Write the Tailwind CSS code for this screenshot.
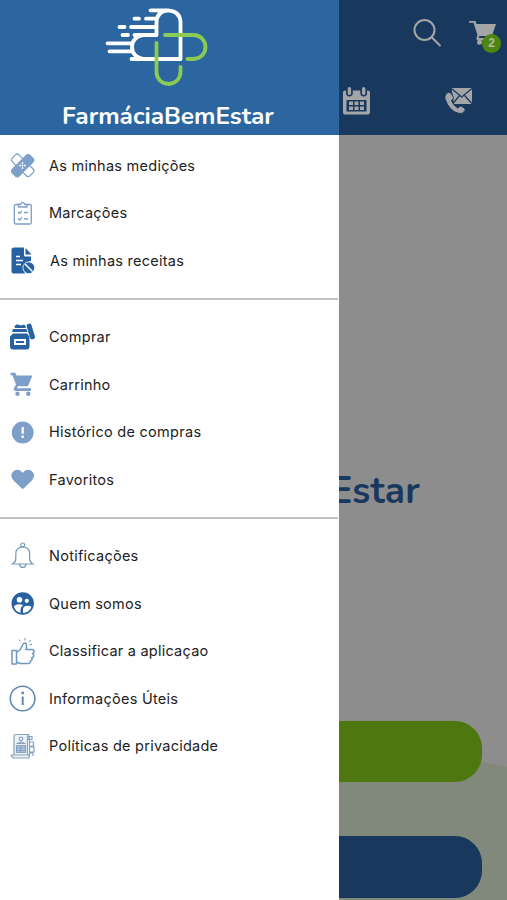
<!DOCTYPE html>
<html lang="pt">
<head>
<meta charset="utf-8">
<title>FarmáciaBemEstar</title>
<script src="https://cdn.jsdelivr.net/npm/@tailwindcss/browser@4"></script>
</head>
<body class="bg-[#8d8d8d]">
<div class="relative w-[507px] h-[900px] overflow-hidden bg-[#8d8d8d]">

  <!-- App page, dimmed behind the drawer -->
  <main class="flex flex-col h-full">
    <header class="h-[135px] shrink-0 bg-[#19385e] text-[#a3a5a7] flex flex-col">
      <div class="flex justify-end pt-[18px] pr-[10px] gap-[27px]">
        <svg class="w-[29px] h-[30px]" viewBox="0 0 29 30" fill="none" stroke="currentColor" stroke-width="2"><circle cx="11.500" cy="12" r="10"/><path d="M18.700 19.300L27.500 28"/></svg>
        <div class="relative">
          <svg class="w-[28px] h-[30px]" viewBox="0 0 28 30" fill="currentColor"><path d="M0 3h6.500l1 3H27l-3.500 10.500q-.5 1.500-2 1.500H10.500l-1 2H25v2.500H10q-3 0-2.500-3l1-2.500L4.500 4.700H0z"/><circle cx="10.500" cy="24.300" r="2.500"/></svg>
          <span class="absolute left-[13px] top-[16px] size-[19px] rounded-full bg-[#4f8610] text-[#b2b8aa] font-['Liberation_Sans'] font-bold text-[12px] leading-[19px] text-center">2</span>
        </div>
      </div>
      <div class="flex pl-[343px] gap-[74px] pt-[38px]">
        <svg class="w-[27px] h-[29px]" viewBox="0 0 27 29" fill="currentColor"><path fill-rule="evenodd" d="M2 4.500h1v2.500a3.400 3.400 0 0 0 6.800 0V4.500h7.500v2.500a3.400 3.400 0 0 0 6.800 0V4.500H25q2 0 2 2V26.500q0 2-2 2H2q-2 0-2-2V6.500q0-2 2-2zM3.500 14v11.500h20V14z"/><rect x="4.700" y="1" width="3.400" height="8" rx="1.700"/><rect x="19" y="1" width="3.400" height="8" rx="1.700"/><path d="M6 15.500h4v3.500H6zM11.500 15.500h4v3.500h-4zM17 15.500h4v3.500h-4zM6 20.500h4V24H6zM11.500 20.500h4V24h-4zM17 20.500h4V24h-4z"/></svg>
        <svg class="w-[29px] h-[29px]" viewBox="0 0 29 29"><path fill="currentColor" d="M7.500 2H28v16H10z"/><path d="M7.500 2.500L17.700 11 28 2.500M9 17.500l6.500-8M28 17.500L20.500 9.500" fill="none" stroke="#19385e" stroke-width="1.200"/><path d="M5 6Q0 8 1 13q4 12 14 14.500 4 1 6.500-3.500-.5-2.500-4.500-4-2 0-3 2.200Q9 19 7.500 14.500q2-1.500 2-3Q8 7 5 6z" fill="currentColor" stroke="#19385e" stroke-width="1"/></svg>
      </div>
    </header>
    <div class="h-[586px] shrink-0 flex items-center">
      <div class="w-[420px] mt-[126px] text-right font-['Nunito','Open_Sans',sans-serif] font-bold text-[37px] leading-[48px] tracking-[0.2px] text-[#19385e]">Estar</div>
    </div>
    <div class="relative flex-1 flex flex-col gap-[54px] items-start">
      <svg class="absolute left-0 top-0 w-[507px] h-[179px]" viewBox="0 0 507 179"><path d="M339 60Q420 35 477 40 492 42 507 46V179H339z" fill="#81897d"/></svg>
      <div class="relative ml-[25px] w-[457px] h-[61px] rounded-[27px] bg-[#4e7710]"></div>
      <div class="relative ml-[25px] w-[457px] h-[62px] rounded-[27px] bg-[#19385e]"></div>
    </div>
  </main>

  <!-- Navigation drawer -->
  <aside class="absolute inset-y-0 left-0 w-[339px] bg-white flex flex-col font-['Inter',sans-serif] text-[14.5px] text-[#222]">
    <div class="h-[134.700px] shrink-0 bg-[#2c66a1] flex flex-col items-center">
      <svg class="w-[339px] h-[90px] shrink-0" viewBox="0 0 339 90" fill="none" stroke-width="3.800" stroke-linecap="round" stroke-linejoin="round">
        <path stroke="#fff" d="M150.500 10.300H168Q180.500 11 180.500 23V59H131.500M168 10.300Q156.500 11 156.500 23V35H134.500M144 35Q132 37 132 47T144 59M134.500 18.700h4.500M146 18.700h10M119.500 27h5M131 27h25M122.500 35h5.500M107.500 43.300H131M109.500 51.300H131"/>
        <path stroke="#8bcb54" d="M165 35h28.500a12 12 0 0 1 0 24h-6M156.500 43v29a12 12 0 0 0 24 0v-5"/>
      </svg>
      <div class="text-white font-['Nunito','Open_Sans',sans-serif] font-bold text-[24.400px] leading-[32px] mt-[10px] -ml-[3px] whitespace-nowrap">FarmáciaBemEstar</div>
    </div>

    <nav class="pt-[7px]">
      <ul class="h-[156px] *:h-[47.6px] *:flex *:items-center *:pl-[9px] *:gap-[13px] *:whitespace-nowrap">
        <li><svg class="size-[27px]" viewBox="0 0 27 27"><g transform="rotate(-45 13.500 13.500)" stroke="#7e9fc9" stroke-width="1.200"><rect x="9" y="1" width="9.500" height="25" rx="2.500" fill="#fff"/><path d="M8 9H4Q1 9 1 12v3.500q0 3 3 3h4zM19 9h4q3 0 3 3v3.500q0 3-3 3h-4zM9 9h9.500v9.500H9z" fill="#7e9fc9"/></g><g fill="#fff"><circle cx="11" cy="13.500" r=".9"/><circle cx="16" cy="13.500" r=".9"/><circle cx="13.500" cy="11" r=".9"/><circle cx="13.500" cy="16" r=".9"/><circle cx="13.500" cy="13.500" r=".9"/></g></svg><span class="tracking-[0.26px]">As minhas medições</span></li>
        <li><svg class="size-[27px]" viewBox="0 0 27 27" fill="none" stroke="#7e9fc9" stroke-width="1.300"><rect x="5.300" y="4.500" width="17" height="19.500" rx="1.500"/><path d="M9.500 7V4.500h2.200q.3-2 2-2t2 2H18V7z" fill="#fff"/><path d="M9 12l1.500 1.500L13 11M15 12.500h4M9 18.500l1.500 1.500 2.500-2.500M15 19h4"/></svg><span class="tracking-[0.26px]">Marcações</span></li>
        <li><svg class="size-[27px]" viewBox="0 0 27 27"><path fill="#2861a2" d="M5 .5h10V8q0 1.500 1.500 1.500H22V14q-7 1-7.500 8 .2 3 2 4.500H5Q2.500 26.500 2.500 24V3Q2.500.5 5 .5zM16.500 1l6 6.500h-6z"/><path d="M7 9.500h4M7 13.500h7M7 17.500h5" stroke="#fff" stroke-width="1.300"/><circle cx="19.800" cy="20.800" r="5.900" fill="#2861a2" stroke="#fff" stroke-width=".8"/><path d="M16 17l7.500 7.500" stroke="#fff" stroke-width="1.400"/></svg><span class="ml-[1px] tracking-[0.26px]">As minhas receitas</span></li>
      </ul>
      <hr class="border-0 h-[2px] w-[338px] bg-[#c2c2c2]">
      <ul class="h-[217px] pt-[13.500px] *:h-[47.6px] *:flex *:items-center *:pl-[9px] *:gap-[13px] *:whitespace-nowrap">
        <li><svg class="size-[27px]" viewBox="0 0 27 27" fill="#2861a2"><path d="M5.500 3l2-1.500h2l1 .8h3l1-.8L16 2l1 3H6zM4 6h13.500l1 3H3z"/><rect x="19.300" y=".5" width="5" height="16" rx="2" transform="rotate(-17 21.800 8.500)"/><path fill-rule="evenodd" d="M4 10.500h14l2.500 3v10q0 3-3 3H4q-3 0-3-3v-10zM5 16v6h12v-6z"/><path d="M7 18h8v2H7z"/></svg><span class="tracking-[0.26px]">Comprar</span></li>
        <li><svg class="size-[27px]" viewBox="0 0 27 27" fill="#7e9fc9"><path d="M1.500 1.800h4.800L7.500 4.500h16l-4 9.500q-.5 1.300-2 1.300H9l-1 2h14V20H7q-3-.2-2-3l2-3.500L3.500 4.300h-2z"/><circle cx="8.500" cy="22.800" r="2.200"/><circle cx="19.300" cy="22.800" r="2.200"/></svg><span class="tracking-[0.26px]">Carrinho</span></li>
        <li><svg class="size-[27px]" viewBox="0 0 27 27"><circle cx="13.700" cy="13.500" r="10.900" fill="#7e9fc9"/><path d="M13.700 8v6.700M13.700 16.500v2.500" stroke="#fff" stroke-width="2.300"/></svg><span class="tracking-[0.28px]">Histórico de compras</span></li>
        <li><svg class="size-[27px]" viewBox="0 0 27 27"><path d="M13.700 23.300L5 15Q-.5 9 5 4.800q5-3 8.700 2 3.700-5 8.700-2Q27.800 9 22.400 15z" fill="#7e9fc9"/></svg><span class="tracking-[0.26px]">Favoritos</span></li>
      </ul>
      <hr class="border-0 h-[2px] w-[338px] bg-[#c2c2c2]">
      <ul class="pt-[13.500px] *:h-[47.6px] *:flex *:items-center *:pl-[9px] *:gap-[13px] *:whitespace-nowrap">
        <li><svg class="size-[27px]" viewBox="0 0 27 27" fill="none" stroke="#7099bb" stroke-width="1.200"><circle cx="13.700" cy="3" r="2"/><path d="M3.500 22q3.300-2 3.300-5v-5q0-7 6.900-7t6.900 7v5q0 3 3.300 5zM10.500 22.300q.5 3.200 3.200 3.200t3.200-3.200"/></svg><span class="tracking-[0.26px]">Notificações</span></li>
        <li><svg class="size-[27px]" viewBox="0 0 27 27"><circle cx="13.700" cy="13.500" r="11.200" fill="#2861a2"/><g fill="#fff"><circle cx="10.500" cy="9.800" r="2.800"/><circle cx="17.800" cy="10.800" r="2.100"/><path d="M4.800 16.500q1.500-2.300 5.500-2.300 2.700 0 3.700 1-2.500 1.500-2.500 4.500v3.300q-5-1.300-6.700-6.500zM14 23v-3.300q0-4 4.500-4 3 0 4 1.200Q20.500 22.500 14 23z"/></g></svg><span class="tracking-[0.26px]">Quem somos</span></li>
        <li><svg class="size-[27px]" viewBox="0 0 27 27" fill="none" stroke="#6f98c2" stroke-width="1.500" stroke-linejoin="round"><path d="M3 12.500h4.500V26H3zM7.500 14q4-1 6-7 .5-2.300 2.500-2 2.500.7 1 6.500h6q2 0 2 2t-1.500 2q2 1 .8 3.300-.5 1-1.500.7 1 3-1.500 3.500.3 2.500-2 2.500H11l-3.500-1.500"/><path d="M11.500 3.500L10 1.500M16 2.500V0M20 4l1.800-2M20.500 7l2.500-.8" stroke-width="1"/></svg><span class="tracking-[0.23px]">Classificar a aplicaçao</span></li>
        <li><svg class="size-[27px]" viewBox="0 0 27 27"><circle cx="13.600" cy="13.500" r="12.300" fill="none" stroke="#6389b5" stroke-width="1.600"/><path d="M13.700 11.500v8.500" stroke="#6389b5" stroke-width="2"/><circle cx="13.700" cy="8" r="1.400" fill="#6389b5"/></svg><span class="tracking-[0.26px]">Informações Úteis</span></li>
        <li><svg class="size-[27px]" viewBox="0 0 27 27" fill="none" stroke="#87a3c0" stroke-width="1.200"><path d="M5 22V3.500Q5 1.500 7 1.500h13.500Q18.500 2 18.500 4v18M5 22H2.500q0 3 2.500 3h13.500q2 0 2-2.500V22H5z" fill="#edf2f7"/><circle cx="12" cy="5.800" r="1.800"/><path d="M8.500 10.500q3.500-3 7 0zM7.500 12.500h9v7h-9z" fill="#b3c6d9"/><path d="M8 15h8M8 17.500h8M11.500 13v6"/><path d="M20.500 3v19M19 3.500h4v3h-4zM20.500 9h4v4h-3M20.500 14h4.500v5h-4.500M20.500 20h3.500v3"/></svg><span class="tracking-[0.25px]">Políticas de privacidade</span></li>
      </ul>
    </nav>
  </aside>
</div>
</body>
</html>
